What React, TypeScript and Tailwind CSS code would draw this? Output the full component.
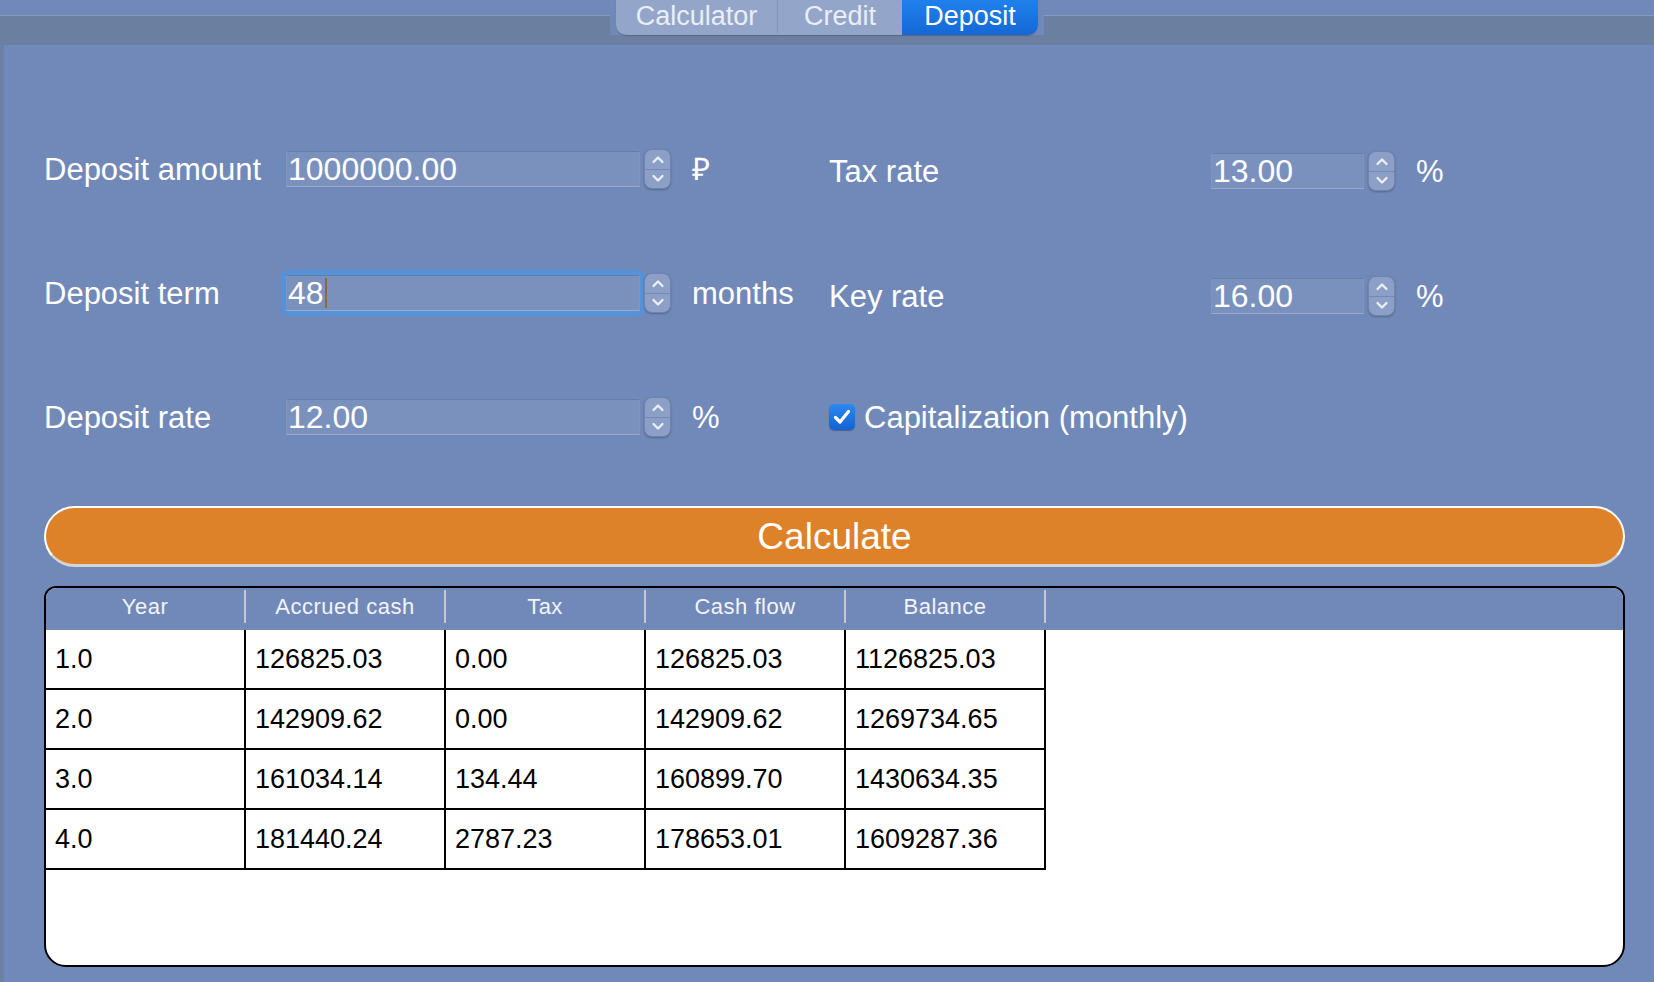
import React from 'react';

const rows = [
  ['1.0', '126825.03', '0.00', '126825.03', '1126825.03'],
  ['2.0', '142909.62', '0.00', '142909.62', '1269734.65'],
  ['3.0', '161034.14', '134.44', '160899.70', '1430634.35'],
  ['4.0', '181440.24', '2787.23', '178653.01', '1609287.36'],
];

const columns = ['Year', 'Accrued cash', 'Tax', 'Cash flow', 'Balance'];

const Stepper = () => (
  <div className="flex h-[40px] w-[27px] flex-col overflow-hidden rounded-[8px] border border-[#7084af] bg-[#8c9fc6] shadow-[0_1px_2px_rgba(0,0,0,0.25)]">
    <div className="flex flex-1 items-center justify-center border-b border-[#7689b2]">
      <svg width="14" height="9" viewBox="0 0 14 9">
        <path d="M2.5 7 L7 2.5 L11.5 7" stroke="#eef2f8" strokeWidth="2.2" fill="none" strokeLinecap="round" strokeLinejoin="round" />
      </svg>
    </div>
    <div className="flex flex-1 items-center justify-center">
      <svg width="14" height="9" viewBox="0 0 14 9">
        <path d="M2.5 2 L7 6.5 L11.5 2" stroke="#eef2f8" strokeWidth="2.2" fill="none" strokeLinecap="round" strokeLinejoin="round" />
      </svg>
    </div>
  </div>
);

type FieldProps = {
  label: string;
  value: string;
  unit: string;
  labelWidth: string;
  inputWidth: string;
  focused?: boolean;
  className?: string;
};

const Field: React.FC<FieldProps> = ({ label, value, unit, labelWidth, inputWidth, focused, className }) => {
  const box = (
    <div
      className={`${inputWidth} flex h-[36px] items-center border border-[#8295bf] border-t-[#687ea9] border-b-[#98a9cc] bg-[#7a91bd] pl-[1px] text-[32px] leading-none text-white`}
    >
      {value}
      {focused && <span className="ml-[1px] inline-block h-[30px] w-[2px] bg-[#8a6a3c]" />}
    </div>
  );

  return (
    <div className={`flex h-[40px] items-center ${className ?? ''}`}>
      <div className={`${labelWidth} text-[31px] leading-none text-white`}>{label}</div>
      {focused ? (
        <div className="-m-[5px] rounded-[7px] bg-[#5592da] p-[5px]">{box}</div>
      ) : (
        box
      )}
      <div className="relative ml-[4px]">
        <Stepper />
      </div>
      <div className="ml-[21px] text-[31px] leading-none text-white">{unit}</div>
    </div>
  );
};

const App: React.FC = () => {
  return (
    <div className="h-[982px] w-full overflow-hidden bg-[#7189b8] font-['Liberation_Sans',Arial,sans-serif]">
      <div className="flex h-[45px] justify-center bg-[linear-gradient(to_bottom,#7189b8_15px,#8799bf_15px,#8799bf_16px,#6b7fa1_16px)]">
        <div className="flex h-[35px] bg-[#7189b8] px-[6px]">
          <div className="flex h-[35px] overflow-hidden rounded-b-[10px] bg-[#93a6c9] pb-[2px] text-[27px] leading-none text-[#eaeef6] shadow-[0_1px_1px_rgba(0,0,0,0.2)]">
            <div className="flex w-[162px] items-center justify-center border-r border-[#8294b8]">Calculator</div>
            <div className="flex w-[124px] items-center justify-center">Credit</div>
            <div className="-mb-[2px] flex w-[136px] items-center justify-center bg-[linear-gradient(to_bottom,#1f80ec,#1568d5)] pb-[2px] text-white">
              Deposit
            </div>
          </div>
        </div>
      </div>

      <div className="h-[937px] border-l-4 border-[#6c80a4] pl-[40px]">
        <div className="flex pt-[104px]">
          <div className="flex w-[785px] flex-col gap-[84px]">
            <Field label="Deposit amount" value="1000000.00" unit="₽" labelWidth="w-[242px]" inputWidth="w-[354px]" />
            <Field label="Deposit term" value="48" unit="months" labelWidth="w-[242px]" inputWidth="w-[354px]" focused />
            <Field label="Deposit rate" value="12.00" unit="%" labelWidth="w-[242px]" inputWidth="w-[354px]" />
          </div>
          <div className="flex flex-col">
            <Field label="Tax rate" value="13.00" unit="%" labelWidth="w-[382px]" inputWidth="w-[153px]" className="mt-[2px]" />
            <Field label="Key rate" value="16.00" unit="%" labelWidth="w-[382px]" inputWidth="w-[153px]" className="mt-[85px]" />
            <div className="mt-[81px] flex h-[40px] items-center">
              <div className="flex h-[26px] w-[26px] items-center justify-center rounded-[5px] bg-[linear-gradient(to_bottom,#2b88f2,#1562d0)] shadow-[0_1px_1px_rgba(0,0,0,0.3)]">
                <svg width="20" height="18" viewBox="0 0 20 18">
                  <path d="M3.5 9.5 L8 14 L16.5 3.5" stroke="#ffffff" strokeWidth="3.2" fill="none" strokeLinecap="round" strokeLinejoin="round" />
                </svg>
              </div>
              <div className="ml-[9px] text-[31px] leading-none text-white">Capitalization (monthly)</div>
            </div>
          </div>
        </div>

        <button className="mt-[69px] flex h-[61px] w-[1581px] items-center justify-center rounded-full border-2 border-white border-b-[3px] border-b-[#d2d4d8] bg-[#dd8228] text-[37px] leading-none text-white">
          Calculate
        </button>

        <div className="mt-[19px] flex h-[381px] w-[1581px] flex-col overflow-hidden rounded-t-[12px] rounded-b-[22px] border-2 border-black bg-white">
          <div className="flex h-[42px] shrink-0 items-start bg-[#7189b8] pt-[2px]">
            {columns.map((c) => (
              <div key={c} className="flex h-[33px] w-[200px] items-center justify-center border-r-2 border-[#c6c9cf] text-[22px] leading-none tracking-[0.5px] text-[#f2f4f9]">
                {c}
              </div>
            ))}
          </div>
          {rows.map((r) => (
            <div key={r[0]} className="flex">
              {r.map((v, i) => (
                <div key={i} className="flex h-[60px] w-[200px] items-center border-r-2 border-b-2 border-black pl-[9px] text-[27px] leading-none text-black">
                  {v}
                </div>
              ))}
            </div>
          ))}
        </div>
      </div>
    </div>
  );
};

export default App;
